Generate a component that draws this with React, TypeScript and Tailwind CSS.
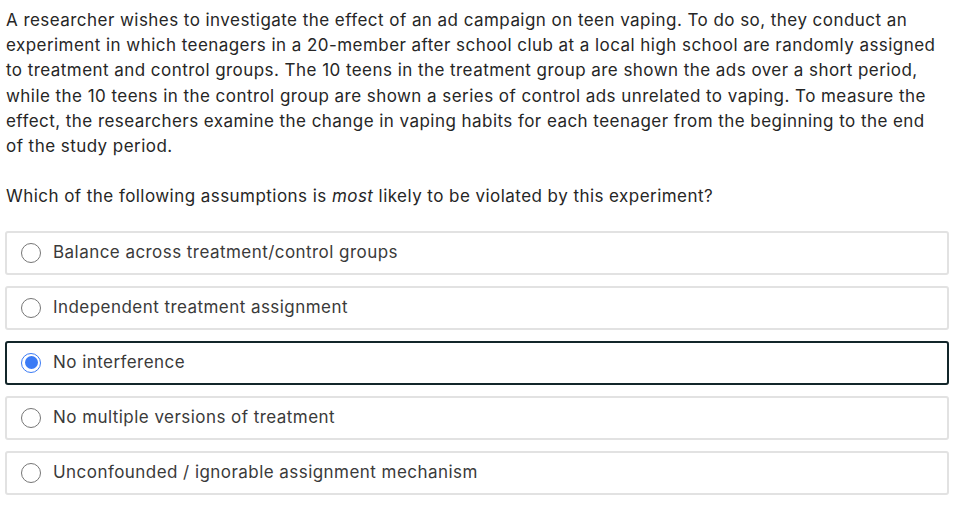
import React from "react";

const options = [
  "Balance across treatment/control groups",
  "Independent treatment assignment",
  "No interference",
  "No multiple versions of treatment",
  "Unconfounded / ignorable assignment mechanism",
];

export default function App() {
  const selected = 2;
  return (
    <div className="w-[971px] h-[521px] bg-white font-['Inter',sans-serif] text-[17px] tracking-[0.45px] leading-[25.2px] text-[#262626]">
      <div className="w-[944px] ml-[5px] pt-[8px]">
        <p className="pl-[1px] pr-[6px]">
          A researcher wishes to investigate the effect of an ad campaign on teen vaping. To do so, they conduct an experiment in which teenagers in a 20-member after school club at a local high school are randomly assigned to treatment and control groups. The 10 teens in the treatment group are shown the ads over a short period, while the 10 teens in the control group are shown a series of control ads unrelated to vaping. To measure the effect, the researchers examine the change in vaping habits for each teenager from the beginning to the end of the study period.
        </p>
        <p className="pl-[1px] mt-[25px]">
          Which of the following assumptions is <em>most</em> likely to be violated by this experiment?
        </p>
        <div className="mt-[21.5px] flex flex-col gap-[11px]">
          {options.map((o, i) => {
            const sel = i === selected;
            return (
              <label
                key={o}
                className={`flex items-center h-[44px] rounded-[3px] border-2 pl-[14px] text-[#3a3a3a] ${sel ? "border-[#13262a]" : "border-[#e2e2e2]"}`}
              >
                {sel ? (
                  <span className="w-[20px] h-[20px] rounded-full border-[1.5px] border-[#3b7bf5] flex items-center justify-center">
                    <span className="w-[13px] h-[13px] rounded-full bg-[#3b7bf5]" />
                  </span>
                ) : (
                  <span className="w-[20px] h-[20px] rounded-full border border-[#767676] bg-white" />
                )}
                <span className="ml-[12px]">{o}</span>
              </label>
            );
          })}
        </div>
      </div>
    </div>
  );
}
